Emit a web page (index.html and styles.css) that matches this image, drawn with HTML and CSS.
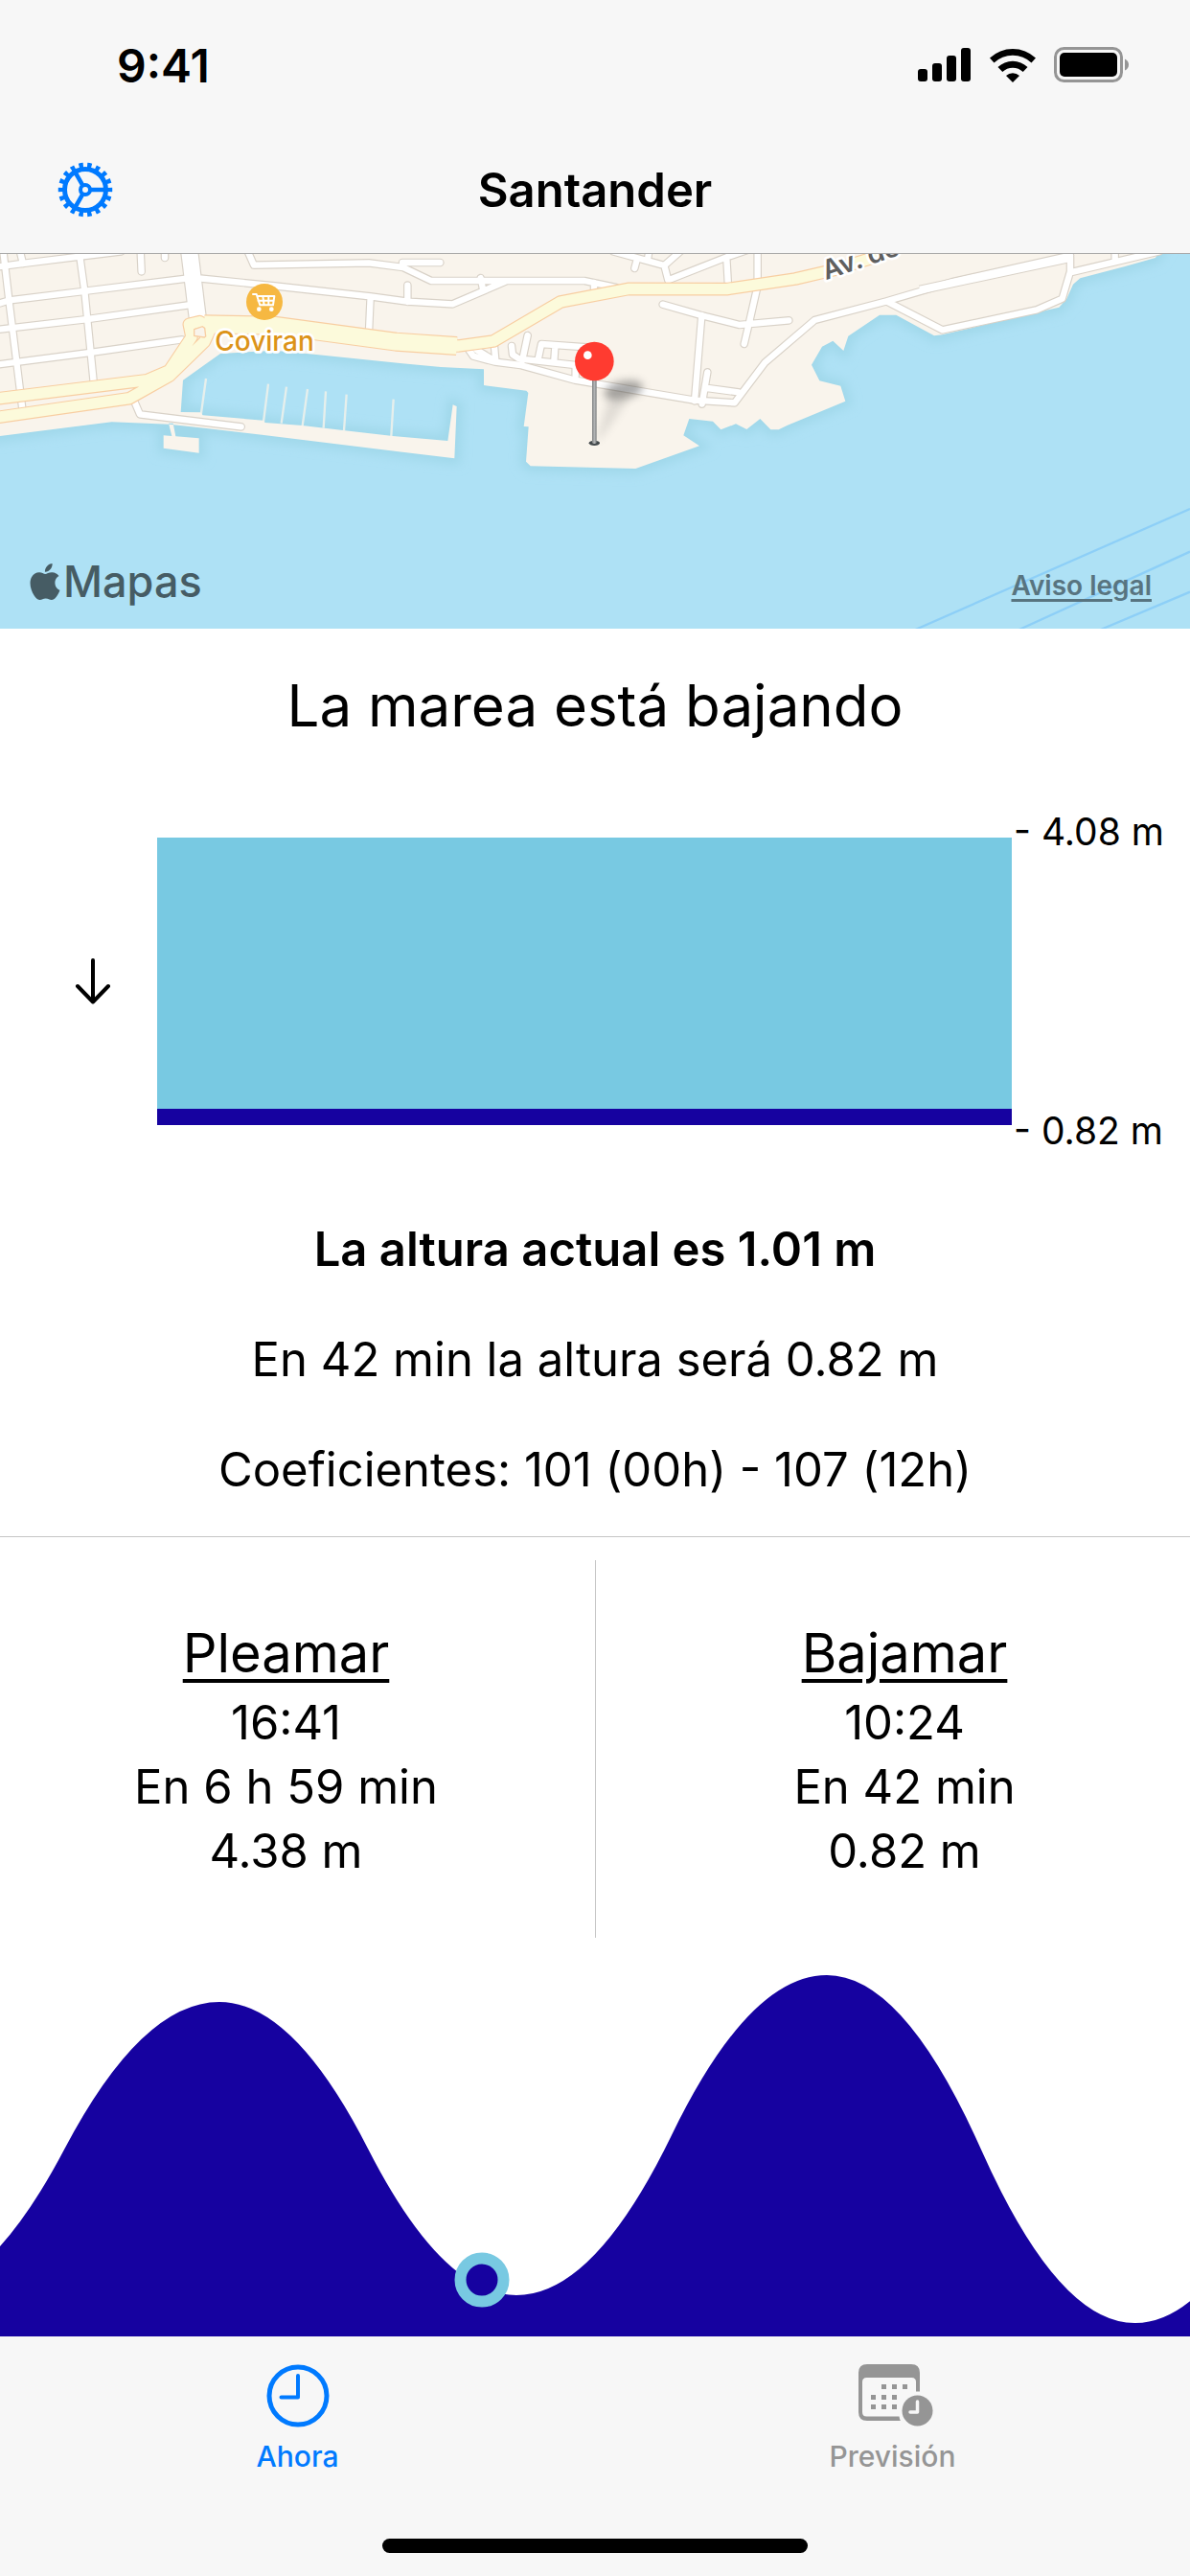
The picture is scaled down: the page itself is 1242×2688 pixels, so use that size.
FILE: index.html
```html
<!DOCTYPE html>
<html lang="es">
<head>
  <meta charset="utf-8">
  <meta name="viewport" content="width=device-width, initial-scale=1">
  <title>Santander</title>
  <link rel="stylesheet" href="styles.css">
</head>
<body>
  <div class="app">
    <header class="top">
      <div class="status">
        <span class="clock">9:41</span>
        <div class="status-icons">
          <svg width="56" height="36" viewBox="0 0 56 36">
            <rect x="0" y="22" width="10" height="13" rx="3"/>
            <rect x="15" y="16" width="10" height="19" rx="3"/>
            <rect x="30" y="8" width="10" height="27" rx="3"/>
            <rect x="45" y="0" width="10" height="35" rx="3"/>
          </svg>
          <svg width="48" height="36" viewBox="0 0 48 36">
            <path d="M0 10.500a35 35 0 0 1 48 0L43.500 15.500a28.500 28.500 0 0 0-39 0z"/>
            <path d="M8.500 20a22.500 22.500 0 0 1 31 0l-4.800 5a15.600 15.600 0 0 0-21.400 0z"/>
            <path d="M17 29a10.500 10.500 0 0 1 14 0l-7 7z"/>
          </svg>
          <svg width="80" height="38" viewBox="0 0 80 38">
            <rect x="1.500" y="1.500" width="69" height="34" rx="9" fill="none" stroke="#959595" stroke-width="3"/>
            <rect x="6" y="6" width="60" height="25" rx="5"/>
            <path d="M74 12.500q4 2 4 6t-4 6z" fill="#959595"/>
          </svg>
        </div>
      </div>
      <nav class="navbar">
        <button class="settings" aria-label="Ajustes">
          <svg width="58" height="58" viewBox="-29 -29 58 58" fill="none" stroke="#007aff">
            <circle r="25.500" stroke-width="5.500" pathLength="36" stroke-dasharray="1 1" stroke-dashoffset=".5"/>
            <circle r="21.500" stroke-width="5"/>
            <circle r="5" stroke-width="4"/>
            <path stroke-width="4.500" d="M6 0H20M-3 5.200L-10 17.300M-3-5.200L-10-17.300"/>
          </svg>
        </button>
        <h1>Santander</h1>
      </nav>
    </header>

    <section class="map">
      <svg class="map-canvas" viewBox="0 30 3726 1173" preserveAspectRatio="xMidYMid slice">
        <defs>
          <filter id="coast" x="-5%" y="-5%" width="110%" height="115%"><feGaussianBlur stdDeviation="16"/></filter>
          <filter id="soft" x="-50%" y="-50%" width="200%" height="200%"><feGaussianBlur stdDeviation="13"/></filter>
          <linearGradient id="stem"><stop offset="0" stop-color="#7d7f80"/><stop offset=".5" stop-color="#b4b6b7"/><stop offset="1" stop-color="#7d7f80"/></linearGradient>
          <path id="land" d="M-40-40V604L0 600L350 556L530 563L640 575L820 596L1260 650L1423 670L1430 507L1418 502L1402 615L1230 600L1080 583L947 567L830 558L825 551L635 535L628 526L566 525L573 425L690 342L860 332L990 345L1260 373L1380 384L1515 391V441L1648 458L1654 465L1640 570L1655 571L1647 680L1661 694L1990 702L2190 631L2140 598L2158 546L2232 554L2257 580L2304 562L2338 579L2380 546L2413 580L2438 580L2466 566L2647 491L2632 443L2566 427L2541 377L2574 320L2608 302L2641 333L2656 287L2754 221L2806 221L2925 286L2950 283L3250 212L3316 197L3340 170L3360 125L3382 106L3520 70L3618 42L3660-40Z M512 598L538 600L528 560H542L550 601L623 607V653L512 638Z"/>
          <g id="streets" fill="none" stroke-linecap="round" stroke-linejoin="round">
            <path d="M-20 72L70 60L250 38L380 22M-20 190L30 175L260 147L585 107M-20 268L275 234L590 190M-20 378L290 338L570 298"/>
            <path d="M10 20L30 190L70 515M62 20L72 60M250 38L265 147L293 430M440 20L443 85M516 20V42M420 490L438 532L755 571"/>
            <path d="M630 107L860 130L1160 163L1275 179L1417 187L1585 115M1160 163L1155 275M775 20L795 65L1155 58L1262 72L1350 114H1830L1930 135M1260 57H1378M1505 105L1512 140M1276 128V180M1860 120V150"/>
          </g>
          <g id="streets-east" fill="none" stroke-linecap="round" stroke-linejoin="round" transform="translate(1230 0)">
            <path d="M690 22L850 66L900 22M765 45L757 75M802 20L798 48M850 66L862 112L1045 40L1110 18M1045 45L1050 130M1142 20V130L1117 240L1100 312M845 188L965 222L1085 252L1240 238M967 222L945 490M985 400L968 500M985 450L1082 463"/>
            <path d="M238 330L252 350L320 368L400 378L570 425L945 488L1070 496L1165 370L1321 237L1546 178L1721 268L2016 205L2096 170L2121 85V40M1546 178L1750 118L2121 35M2121 88L2400 22M2261 20V50"/>
            <path d="M318 320L322 365M422 285L405 365M372 318L375 345L395 358L572 378V412M455 360L465 312L620 323M508 320L505 365M262 330L315 362"/>
          </g>
          <path id="avenue-wide" fill="none" stroke-linejoin="round" d="M640 250L860 254L1240 305L1430 318"/>
          <path id="avenue" fill="none" stroke-linejoin="round" d="M1400 318H1435L1545 303L1755 180L1970 139L2275 140L2490 108L2610 80L2740 40L2810 10M-20 484L460 425L530 395L600 290L592 250L625 242L660 262L640 305L530 412L405 482L-20 543"/>
        </defs>
        <rect x="-40" y="-40" width="3800" height="1300" fill="#aee1f5"/>
        <use href="#land" fill="#a0d8ea" stroke="#a0d8ea" stroke-width="36" filter="url(#coast)"/>
        <path d="M645 420L629 535M840 437L825 555M897 446L881 560M963 453L947 568M1020 460L1013 575M1085 470L1077 583M1232 485L1225 600" stroke="#e6efec" stroke-width="7"/>
        <use href="#land" fill="#f9f4ec"/>
        <use href="#streets" stroke="#d9d2c8" stroke-width="26"/>
        <use href="#streets-east" stroke="#d9d2c8" stroke-width="26"/>
        <path d="M593 20L620 240" stroke="#d9d2c8" stroke-width="58"/>
        <path d="M2880 143L3350 42" stroke="#d9d2c8" stroke-width="30"/>
        <use href="#streets" stroke="#fff" stroke-width="19"/>
        <use href="#streets-east" stroke="#fff" stroke-width="19"/>
        <path d="M593 20L620 240" stroke="#fff" stroke-width="51"/>
        <path d="M2880 143L3350 42" stroke="#fff" stroke-width="24"/>
        <use href="#avenue-wide" stroke="#f8cea2" stroke-width="60"/>
        <use href="#avenue" stroke="#f8cea2" stroke-width="41"/>
        <use href="#avenue-wide" stroke="#fcfadb" stroke-width="53"/>
        <use href="#avenue" stroke="#fcfadb" stroke-width="34"/>
        <path d="M608 266L634 257L641 262L644 288L640 291L608 286Z" fill="#f9f4ec" stroke="#f8cea2" stroke-width="4"/>
        <path d="M2866 1206L3726 828M3191 1206L3726 962M3446 1206L3726 1088" stroke="#8dcff7" stroke-width="7"/>

        <circle cx="828" cy="180" r="57" fill="#f6b842"/>
        <g fill="none" stroke="#fff" stroke-width="6" stroke-linejoin="round" stroke-linecap="round">
          <path d="M792 156H803L814 190H855L859 162H806M808 176H857M823 162L827 190M841 162V190"/>
        </g>
        <circle cx="811" cy="203" r="7" fill="#fff"/>
        <circle cx="850" cy="203" r="7" fill="#fff"/>
        <text class="place" x="828" y="334">Coviran</text>
        <text class="street" transform="translate(2586 112) rotate(-19)">Av. de</text>

        <g transform="translate(1230 0)">
          <path d="M635 620L680 470L740 480L665 590Z" fill="#555" opacity=".15" filter="url(#soft)"/>
          <ellipse cx="722" cy="456" rx="62" ry="28" transform="rotate(-12 722 456)" fill="#555" opacity=".5" filter="url(#soft)"/>
          <ellipse cx="631" cy="622" rx="17" ry="8" fill="#444a4c"/>
          <rect x="624" y="420" width="14" height="204" rx="5" fill="url(#stem)"/>
          <circle cx="631" cy="366" r="61" fill="#ff3b30"/>
          <circle cx="610" cy="347" r="13" fill="#fff"/>
        </g>
      </svg>
      <div class="map-footer">
        <div class="map-brand">
          <svg width="38" height="38" viewBox="0 0 24 24" fill="#465c64">
            <path d="M12.152 6.896c-.948 0-2.415-1.078-3.960-1.040-2.040.027-3.910 1.183-4.961 3.014-2.117 3.675-.546 9.103 1.519 12.090 1.013 1.454 2.208 3.090 3.792 3.039 1.520-.065 2.090-.987 3.935-.987 1.831 0 2.350.987 3.960.948 1.637-.026 2.676-1.480 3.676-2.948 1.156-1.688 1.636-3.325 1.662-3.415-.039-.013-3.182-1.221-3.220-4.857-.026-3.040 2.480-4.494 2.597-4.559-1.429-2.090-3.623-2.324-4.390-2.376-2-.156-3.675 1.090-4.610 1.090zM15.530 3.830c.843-1.012 1.400-2.427 1.245-3.830-1.207.052-2.662.805-3.532 1.818-.780.896-1.454 2.338-1.273 3.714 1.338.104 2.715-.688 3.559-1.701"/>
          </svg>
          <span>Mapas</span>
        </div>
        <a href="#legal" class="legal">Aviso legal</a>
      </div>
    </section>

    <main>
      <h2>La marea está bajando</h2>

      <div class="gauge">
        <div class="trend">
          <svg width="38" height="50" viewBox="0 0 38 50" fill="none" stroke="#000" stroke-width="4" stroke-linecap="round" stroke-linejoin="round">
            <path d="M19 3V46M3 30L19 46.500L35 30"/>
          </svg>
        </div>
        <div class="tank"><div class="level"></div></div>
        <div class="scale">
          <span>- 4.08 m</span>
          <span>- 0.82 m</span>
        </div>
      </div>

      <div class="summary">
        <p><strong>La altura actual es 1.01 m</strong></p>
        <p>En 42 min la altura será 0.82 m</p>
        <p>Coeficientes: 101 (00h) - 107 (12h)</p>
      </div>

      <div class="tides">
        <section class="tide">
          <h3>Pleamar</h3>
          <p>16:41</p>
          <p>En 6 h 59 min</p>
          <p>4.38 m</p>
        </section>
        <section class="tide">
          <h3>Bajamar</h3>
          <p>10:24</p>
          <p>En 42 min</p>
          <p>0.82 m</p>
        </section>
      </div>

      <svg class="wave" viewBox="0 0 1242 416">
        <path fill="#1602a0" d="M-95 375Q-14 375 67 221T229 67Q306 67 384 220T539 373Q620 373 701 206T863 39Q943 39 1024 221T1185 402Q1266 402 1347 218V416H-95Z"/>
        <circle cx="503" cy="357" r="22.500" fill="#1602a0" stroke="#78c9e2" stroke-width="12"/>
      </svg>
    </main>

    <footer class="tabbar">
      <nav class="tabs">
        <a href="#ahora" class="tab active">
          <svg width="66" height="66" viewBox="0 0 66 66" fill="none" stroke="#007aff">
            <circle cx="33" cy="33" r="30" stroke-width="5"/>
            <path stroke-width="4" stroke-linecap="round" stroke-linejoin="round" d="M33 12V34.500H15.500"/>
          </svg>
          <span>Ahora</span>
        </a>
        <a href="#prevision" class="tab">
          <svg width="84" height="66" viewBox="-6 0 84 66">
            <path fill="#959595" fill-rule="evenodd" d="M9 0H55Q64 0 64 9V28.500H60V18.500Q60 14 55.500 14H8.500Q4 14 4 18.500V50Q4 54.500 8.500 54.500H42.500Q42.800 57 43.800 59H9Q0 59 0 50V9Q0 0 9 0Z"/>
            <path fill="#959595" d="M24 21h5v5h-5zM35 21h5v5h-5zM46 21h5v5h-5zM13 32h5v5h-5zM24 32h5v5h-5zM35 32h5v5h-5zM13 42h5v5h-5zM24 42h5v5h-5zM35 42h5v5h-5z"/>
            <circle cx="61.500" cy="48.500" r="16" fill="#959595"/>
            <path d="M61.500 39V50H54" fill="none" stroke="#f7f7f7" stroke-width="3.500" stroke-linecap="round" stroke-linejoin="round"/>
          </svg>
          <span>Previsión</span>
        </a>
      </nav>
      <div class="home-indicator"></div>
    </footer>
  </div>
</body>
</html>
```

FILE: styles.css
```css
* {
  box-sizing: border-box;
}
body {
  margin: 0;
  font-family: Inter, "Liberation Sans", sans-serif;
  color: #000;
  background-color: #fff;
}
h1, h2, h3, p {
  margin: 0;
  font-weight: 400;
}
svg {
  display: block;
}
.app {
  display: flex;
  flex-direction: column;
  min-height: 100vh;
}

/* status bar + title */
.top {
  background-color: #f7f7f7;
  border-bottom: 1px solid #a9a9a9;
}
.status {
  display: flex;
  justify-content: space-between;
  align-items: center;
  height: 132px;
  padding: 4px 62px 0 122px;
}
.clock {
  font-size: 48px;
  font-weight: 600;
}
.status-icons {
  display: flex;
  align-items: center;
  gap: 19px;
}
.navbar {
  display: grid;
  grid-template-columns: 1fr auto 1fr;
  align-items: center;
  height: 132px;
  padding: 0 60px;
}
.navbar h1 {
  font-size: 49px;
  font-weight: 600;
}
.settings {
  justify-self: start;
  padding: 0;
  border: none;
  background: none;
  cursor: pointer;
}

/* map */
.map {
  position: relative;
}
.map-canvas {
  width: 100%;
}
.place {
  font-size: 84px;
  font-weight: 500;
  text-anchor: middle;
  fill: #dc9318;
  stroke: #fff;
  stroke-width: 16px;
  stroke-linejoin: round;
  paint-order: stroke;
}
.street {
  font-size: 84px;
  font-weight: 600;
  fill: #5f5f5f;
  stroke: #fff;
  stroke-width: 16px;
  stroke-linejoin: round;
  paint-order: stroke;
}
.map-footer {
  position: absolute;
  left: 28px;
  right: 40px;
  bottom: 22px;
  display: flex;
  justify-content: space-between;
  align-items: center;
}
.map-brand {
  display: flex;
  align-items: center;
  color: #465c64;
  font-size: 45px;
  font-weight: 500;
}
.legal {
  padding-top: 8px;
  color: #587480;
  font-size: 28px;
  font-weight: 600;
  text-decoration-thickness: 3px;
  text-underline-offset: 4px;
}

/* current height */
h2 {
  padding: 40px 0 68px;
  font-size: 60px;
  line-height: 80px;
  text-align: center;
}
.gauge {
  display: grid;
  grid-template-columns: 164px 1fr 186px;
  align-items: center;
}
.trend {
  display: flex;
  justify-content: center;
  padding-left: 30px;
}
.tank {
  display: flex;
  flex-direction: column;
  justify-content: flex-end;
  height: 300px;
  background-color: #78c9e2;
}
.level {
  height: 17px;
  background-color: #1602a0;
}
.scale {
  display: flex;
  flex-direction: column;
  justify-content: space-between;
  height: 360px;
  padding-left: 2px;
  font-size: 39px;
  line-height: 48px;
}
.summary {
  padding: 68px 0 37px;
  border-bottom: 1px solid #c6c6c6;
  font-size: 49px;
  line-height: 64px;
  text-align: center;
}
.summary p {
  margin-bottom: 51px;
}
.summary p:last-child {
  margin-bottom: 0;
}
.summary strong {
  font-weight: 600;
}

/* next tides */
.tides {
  display: grid;
  grid-template-columns: 1fr 1fr;
  padding-top: 24px;
}
.tide {
  padding: 58px 24px 57px 0;
  font-size: 49px;
  line-height: 67px;
  text-align: center;
}
.tide + .tide {
  padding-left: 24px;
  padding-right: 0;
  border-left: 1px solid #c6c6c6;
}
.tide h3 {
  font-size: 56px;
  line-height: 78px;
  text-decoration: underline;
  text-decoration-thickness: 4px;
  text-underline-offset: 7px;
}
.wave {
  width: 100%;
}

/* tab bar */
.tabbar {
  margin-top: auto;
  padding: 29px 0 24px;
  background-color: #f7f7f7;
}
.tabs {
  display: grid;
  grid-template-columns: 1fr 1fr;
}
.tab {
  display: flex;
  flex-direction: column;
  align-items: center;
  gap: 11px;
  color: #959595;
  font-size: 30px;
  font-weight: 500;
  line-height: 38px;
  text-decoration: none;
}
.tab.active {
  color: #007aff;
}
.home-indicator {
  width: 444px;
  height: 15px;
  margin: 67px auto 0;
  border-radius: 8px;
  background-color: #000;
}
```
